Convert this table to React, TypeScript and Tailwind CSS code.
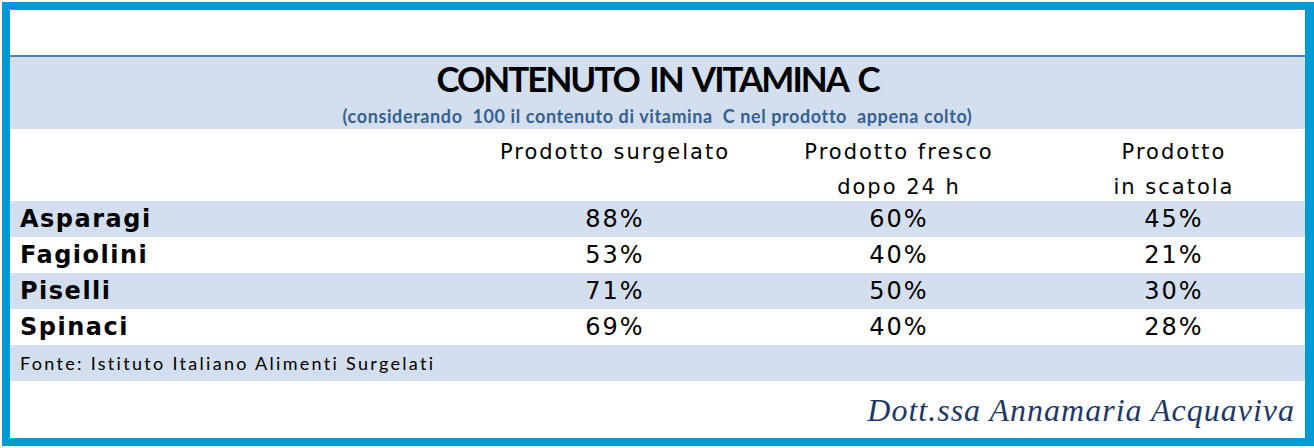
import React from "react";

const rows = [
  { name: "Asparagi", v: ["88%", "60%", "45%"], band: true },
  { name: "Fagiolini", v: ["53%", "40%", "21%"], band: false },
  { name: "Piselli", v: ["71%", "50%", "30%"], band: true },
  { name: "Spinaci", v: ["69%", "40%", "28%"], band: false },
];

export default function App() {
  return (
    <div className="w-[1314px] h-[448px] bg-white pt-[2px] pl-[2px]">
      <div className="w-[1312px] h-[444px] border-[8px] border-r-[9px] border-[#009ad5] bg-white flex flex-col">
        <div className="h-[47px] shrink-0 border-b-2 border-[#4f81bd]" />
        <div className="h-[72px] shrink-0 bg-[#d3dfee] flex flex-col items-center" style={{ fontFamily: "Lato, 'Open Sans', sans-serif" }}>
          <div className="text-[35px] font-bold text-black leading-[40px] mt-[1px] tracking-[-2px] [word-spacing:4px]">CONTENUTO IN VITAMINA C</div>
          <div className="text-[18px] font-bold text-[#366092] leading-[22px] mt-[7px] tracking-[0.6px] whitespace-pre">(considerando  100 il contenuto di vitamina  C nel prodotto  appena colto)</div>
        </div>
        <div
          className="grid grid-cols-[465px_280px_288px_262px] h-[72px] shrink-0 text-[21px] text-black leading-[35px] tracking-[2px]"
          style={{ fontFamily: "'DejaVu Sans', Verdana, sans-serif" }}
        >
          <div />
          <div className="text-center pt-[6px]">Prodotto surgelato</div>
          <div className="text-center pt-[6px]">Prodotto fresco<br />dopo 24 h</div>
          <div className="text-center pt-[6px]">Prodotto<br />in scatola</div>
        </div>
        {rows.map((r) => (
          <div
            key={r.name}
            className={`grid grid-cols-[465px_280px_288px_262px] h-[36px] shrink-0 items-center ${r.band ? "bg-[#d3dfee]" : "bg-white"}`}
            style={{ fontFamily: "'DejaVu Sans', Verdana, sans-serif" }}
          >
            <div className="pl-[10px] text-[24px] font-bold tracking-[1.5px] text-black">{r.name}</div>
            {r.v.map((v, i) => (
              <div key={i} className="text-center text-[24px] tracking-[2px] text-black">{v}</div>
            ))}
          </div>
        ))}
        <div className="h-[36px] shrink-0 bg-[#d3dfee] flex items-center pl-[10px] text-[18px] tracking-[2.3px] text-black" style={{ fontFamily: "Lato, 'Open Sans', sans-serif" }}>
          Fonte: Istituto Italiano Alimenti Surgelati
        </div>
        <div className="flex-1 flex justify-end items-center pr-[10px]">
          <div className="italic text-[32px] text-[#1f3864] tracking-[1px]" style={{ fontFamily: "'Liberation Serif', 'DejaVu Serif', serif" }}>
            Dott.ssa Annamaria Acquaviva
          </div>
        </div>
      </div>
    </div>
  );
}
